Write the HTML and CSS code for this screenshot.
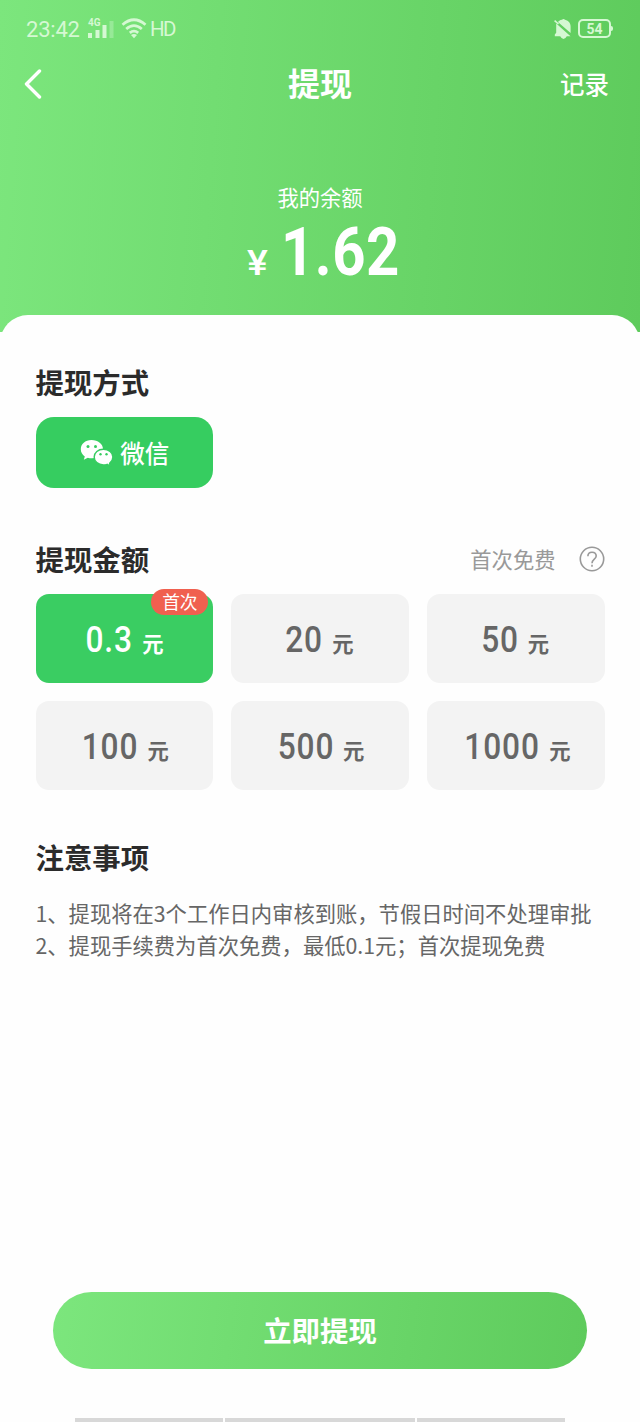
FILE: index.html
```html
<!DOCTYPE html>
<html lang="zh-CN">
<head>
<meta charset="utf-8">
<title>提现</title>
<link rel="stylesheet" href="styles.css">
</head>
<body>
<div class="screen">
  <header class="hero">
    <div class="status">
      <div class="status-left">
        <span class="clock">23:42</span>
        <span class="signal">
          <span class="net">4G</span>
          <svg width="27" height="18" viewBox="0 0 27 18" fill="currentColor"><rect x="0" y="13" width="4" height="5"/><rect x="7.500" y="10" width="4" height="8"/><rect x="14.500" y="5" width="4" height="13"/><rect x="21.500" y="1" width="4" height="17" opacity=".35"/></svg>
        </span>
        <svg class="wifi" width="26" height="21" viewBox="0 0 26 21" fill="none" stroke="currentColor" stroke-width="2.800"><path d="M1.500 6.800Q13-3.200 24.500 6.800"/><path d="M5.200 11Q13 4.300 20.800 11"/><path d="M8.800 14.800Q13 11.500 17.200 14.800"/><path d="M10 17l3 3.300 3-3.300q-3-2-6 0z" fill="currentColor" stroke="none"/></svg>
        <span class="hd">HD</span>
      </div>
      <div class="status-right">
        <svg width="19" height="22" viewBox="0 0 19 22"><path d="M5 3Q6.500 1.800 8 1.700 9.500.2 11 1.700C14.800 2.500 16.600 5.200 16.600 8.500v6.500L3.900 3.900zM2.200 5.600 16.500 18.300H.8v-1.800l1.400-1.700zM6 18h7q-3.500 6-7 0z" fill="currentColor"/><path d="M.6 2.600 4.500 6" stroke="currentColor" stroke-width="1.600"/></svg>
        <span class="battery">54</span>
      </div>
    </div>
    <nav class="nav">
      <svg class="back" width="18" height="30" viewBox="0 0 18 30" fill="none" stroke="currentColor" stroke-width="3.400" stroke-linecap="round" stroke-linejoin="round"><path d="M15.500 2 2.500 15l13 13"/></svg>
      <h1>提现</h1>
      <span class="records">记录</span>
    </nav>
    <div class="balance-label">我的余额</div>
    <div class="balance"><span class="yen">¥</span><span class="sum">1.62</span></div>
  </header>
  <main class="sheet">
    <h2>提现方式</h2>
    <div class="method">
      <svg width="34" height="28" viewBox="0 0 34 28"><path d="M11.500 1C5.200 1 .8 5 .8 10.200c0 3 1.500 5.500 4 7.200l-1 3.300 4-2q2 .6 4.500.5c6 0 10.700-3.900 10.700-9S18 1 11.500 1z" fill="#fff"/><path d="M23.400 10.200c-5.300 0-9.200 3.400-9.200 7.800s3.900 7.900 9.200 7.900q2 0 3.700-.6l3.300 1.700-.8-2.800c2-1.500 3.300-3.700 3.300-6.200 0-4.400-4.200-7.800-9.500-7.800z" fill="#fff" stroke="#36cd60" stroke-width="1.400"/><g fill="#36cd60"><circle cx="8" cy="7.500" r="1.500"/><circle cx="15.500" cy="7.500" r="1.500"/><circle cx="20.500" cy="15.300" r="1.200"/><circle cx="26.500" cy="15.300" r="1.200"/></g></svg>
      <span>微信</span>
    </div>
    <div class="row">
      <h2>提现金额</h2>
      <div class="hint"><span>首次免费</span>
        <svg width="26" height="26" viewBox="0 0 26 26" fill="none" stroke="currentColor" stroke-width="1.600"><circle cx="13" cy="13" r="11.700"/><path d="M8.900 10.300C8.900 7.800 10.600 6.200 13 6.200s4.200 1.600 4.200 3.900c0 3-4.200 3.300-4.200 7.200"/><path d="M13 18.700v2"/></svg>
      </div>
    </div>
    <div class="grid">
      <div class="card active"><b>0.3</b><i>元</i><span class="tag">首次</span></div>
      <div class="card"><b>20</b><i>元</i></div>
      <div class="card"><b>50</b><i>元</i></div>
      <div class="card"><b>100</b><i>元</i></div>
      <div class="card"><b>500</b><i>元</i></div>
      <div class="card"><b>1000</b><i>元</i></div>
    </div>
    <h2>注意事项</h2>
    <div class="notes">
      <p>1、提现将在3个工作日内审核到账，节假日时间不处理审批</p>
      <p>2、提现手续费为首次免费，最低0.1元；首次提现免费</p>
    </div>
  </main>
  <div class="submit">立即提现</div>
  <div class="sysbar"><span></span><span></span><span></span></div>
</div>
</body>
</html>
```
FILE: styles.css
```css
* { box-sizing: border-box; }
body { margin: 0; background: #fefefe; font-family: "Noto Sans CJK SC", sans-serif; }
h1, h2, p { margin: 0; }
svg { display: block; flex: none; }
.screen { width: 640px; height: 1422px; display: flex; flex-direction: column; overflow: hidden; }
.hero { height: 332px; flex: none; color: #fff; background: linear-gradient(94deg, #7ce67d, #5ecb5c); }
.status { height: 56px; padding: 1px 26px 0; display: flex; justify-content: space-between; align-items: center; color: #d5f8d3; font-family: Roboto, sans-serif; }
.status-left, .status-right { display: flex; align-items: center; }
.clock { width: 61px; padding-top: 2px; font-size: 22px; letter-spacing: -.2px; }
.signal { width: 34px; height: 20px; display: grid; }
.signal > * { grid-area: 1 / 1; }
.net { font-size: 10px; line-height: 9px; font-weight: 700; margin: -1px 0 0 1px; }
.signal svg { margin-top: 1px; margin-left: 1px; }
.hd { margin-left: 3px; font-size: 20.500px; letter-spacing: -1.5px; }
.status-right { gap: 5px; }
.battery { position: relative; width: 33px; height: 19px; margin-right: 3px; border: 2px solid currentColor; border-radius: 5px; font-size: 14px; line-height: 16px; font-weight: 700; text-align: center; }
.battery::after { content: ""; position: absolute; right: -4px; top: 5px; width: 2px; height: 5px; background: currentColor; border-radius: 0 2px 2px 0; }
.nav { height: 56px; padding: 0 31px 0 24px; display: grid; grid-template-columns: 1fr auto 1fr; align-items: center; }
.nav h1 { font-size: 32px; line-height: 53px; height: 56px; font-weight: 700; margin-left: 7px; }
.records { justify-self: end; font-size: 24.500px; line-height: 36px; font-weight: 500; }
.balance-label { margin-top: 69px; text-align: center; font-size: 21.300px; line-height: 32px; }
.balance { display: flex; justify-content: center; align-items: baseline; margin-top: 12px; line-height: 56px; font-family: Roboto, sans-serif; font-weight: 700; padding-left: 16px; }
.yen { font-size: 35px; font-weight: 500; margin-right: 6px; line-height: 40px; transform: scaleX(1.120); }
.sum { font-size: 66px; letter-spacing: .5px; transform: scaleX(.880); }
.sheet { margin-top: -17px; padding: 47px 35.500px 0; background: #fefefe; border-radius: 28px 28px 0 0; }
h2 { font-size: 28.400px; line-height: 40px; font-weight: 700; color: #2b2b2b; }
.method { width: 177.700px; height: 71px; margin-top: 14.500px; border-radius: 18px; background: #36cd60; color: #fff; display: flex; justify-content: center; align-items: center; gap: 6px; font-size: 24.500px; font-weight: 500; padding-left: 1px; }
.method svg { margin-top: 2px; }
.row { margin-top: 51.500px; display: flex; justify-content: space-between; align-items: center; }
.hint { display: flex; align-items: center; gap: 23px; font-size: 21.300px; line-height: 32px; color: #999; }
.hint span { margin-top: -1px; }
.grid { margin-top: 15px; display: grid; grid-template-columns: repeat(3, 1fr); grid-auto-rows: 89px; gap: 17.700px; }
.card { position: relative; display: flex; justify-content: center; align-items: baseline; border-radius: 13px; background: #f3f3f3; color: #666; line-height: 85px; }
.card b { font-family: Roboto, sans-serif; font-size: 36px; line-height: 93px; font-weight: 500; letter-spacing: 1px; transform: scaleX(.880); transform-origin: right; margin-left: -6px; }
.card i { margin-left: 9px; font-style: normal; font-size: 21.300px; line-height: 60px; font-weight: 700; }
.card.active { background: #3acd62; color: #fff; }
.tag { position: absolute; right: 5px; top: -5px; width: 57px; height: 26px; border-radius: 13px; background: #f0604f; font-size: 17.700px; line-height: 24px; text-align: center; }
.grid + h2 { margin-top: 47px; }
.notes { margin-top: 20px; font-size: 21.300px; line-height: 32px; color: #666; white-space: nowrap; }
.submit { width: 534px; height: 77px; margin: auto auto 0; flex: none; border-radius: 39px; background: linear-gradient(98deg, #7ce67d, #5ecb5c); color: #fff; font-size: 28.400px; font-weight: 700; line-height: 75px; text-align: center; }
.sysbar { flex: none; width: 490px; height: 4px; margin: 49px auto 0; display: grid; grid-template-columns: 148px 1fr 148px; gap: 2px; }
.sysbar span { background: #d8d8d8; }
```
